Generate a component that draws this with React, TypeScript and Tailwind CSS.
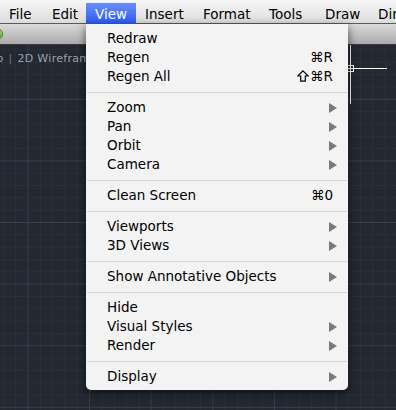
import React from 'react';

type Entry =
  | { kind: 'sep' }
  | { kind: 'item'; label: string; shortcut?: string; shift?: boolean; submenu?: boolean };

const MENU_BAR: { label: string; width: string; active?: boolean }[] = [
  { label: 'File', width: 'w-[43px]' },
  { label: 'Edit', width: 'w-[43px]' },
  { label: 'View', width: 'w-[50px]', active: true },
  { label: 'Insert', width: 'w-[58px]' },
  { label: 'Format', width: 'w-[66px]' },
  { label: 'Tools', width: 'w-[56px]' },
  { label: 'Draw', width: 'w-[53px]' },
  { label: 'Dimension', width: 'w-[90px]' },
];

const VIEW_MENU: Entry[] = [
  { kind: 'item', label: 'Redraw' },
  { kind: 'item', label: 'Regen', shortcut: '⌘R' },
  { kind: 'item', label: 'Regen All', shortcut: '⌘R', shift: true },
  { kind: 'sep' },
  { kind: 'item', label: 'Zoom', submenu: true },
  { kind: 'item', label: 'Pan', submenu: true },
  { kind: 'item', label: 'Orbit', submenu: true },
  { kind: 'item', label: 'Camera', submenu: true },
  { kind: 'sep' },
  { kind: 'item', label: 'Clean Screen', shortcut: '⌘0' },
  { kind: 'sep' },
  { kind: 'item', label: 'Viewports', submenu: true },
  { kind: 'item', label: '3D Views', submenu: true },
  { kind: 'sep' },
  { kind: 'item', label: 'Show Annotative Objects', submenu: true },
  { kind: 'sep' },
  { kind: 'item', label: 'Hide' },
  { kind: 'item', label: 'Visual Styles', submenu: true },
  { kind: 'item', label: 'Render', submenu: true },
  { kind: 'sep' },
  { kind: 'item', label: 'Display', submenu: true },
];

// drawing grid of the model space
const GridCanvas = () => {
  const minor = 12.32;
  const ox = 28 - minor * 2;
  const oy = 99.3 - 45 - minor * 5;
  const lines = [];
  for (let i = 0; i < 40; i++) {
    const x = ox + i * minor;
    if (x > 400) break;
    const major = i % 5 === 2;
    lines.push(
      <line key={`v${i}`} x1={x} y1={0} x2={x} y2={370} stroke={major ? '#373e50' : '#2b313b'} strokeWidth={1} />
    );
  }
  for (let i = 0; i < 40; i++) {
    const y = oy + i * minor;
    if (y > 370) break;
    const major = i % 5 === 0;
    lines.push(
      <line key={`h${i}`} x1={0} y1={y} x2={400} y2={y} stroke={major ? '#373e50' : '#2b313b'} strokeWidth={1} />
    );
  }
  return (
    <svg className="block w-full h-full" viewBox="0 0 396 365" preserveAspectRatio="none">
      {lines}
      {/* crosshair cursor */}
      <line x1={350.5} y1={0} x2={350.5} y2={59} stroke="#ffffff" strokeWidth={1} />
      <line x1={300} y1={23.5} x2={387} y2={23.5} stroke="#ffffff" strokeWidth={1} />
      <rect x={347.5} y={20.5} width={6} height={6} fill="none" stroke="#ffffff" strokeWidth={1} />
    </svg>
  );
};

const SubmenuArrow = () => (
  <svg width="8" height="10" viewBox="0 0 8 10" className="block">
    <polygon points="0,0 8,5 0,10" fill="#7a7a7a" />
  </svg>
);

const ShiftKey = () => (
  <svg width="12" height="12" viewBox="0 0 12 12" className="inline-block mr-[1px] -mt-[2px] align-middle">
    <polygon points="6,0.8 11.2,6 8.3,6 8.3,11.2 3.7,11.2 3.7,6 0.8,6" fill="none" stroke="#000" strokeWidth={1.2} strokeLinejoin="miter" />
  </svg>
);

export default function App() {
  return (
    <div className="relative w-[396px] h-[410px] overflow-hidden bg-[#232831] font-['DejaVu_Sans',sans-serif] select-none">
      {/* menu bar */}
      <div className="h-[24px] flex bg-gradient-to-b from-[#f7f7f7] to-[#dcdcdc] border-b border-[#5a5a5a] text-[13.5px] text-black whitespace-nowrap">
        {MENU_BAR.map((m) => (
          <div
            key={m.label}
            className={`${m.width} shrink-0 mt-[3px] h-[21px] pl-[9px] pt-[2px] flex items-center ${
              m.active ? 'bg-gradient-to-b from-[#6a8df7] to-[#2a5af0] text-white' : ''
            }`}
          >
            {m.label}
          </div>
        ))}
      </div>

      {/* window title bar */}
      <div className="h-[21px] bg-gradient-to-b from-[#dadada] to-[#ababab] border-b border-[#3c3c3c] relative">
        <div className="absolute left-[-9px] top-[4px] w-[12px] h-[12px] rounded-full bg-gradient-to-b from-[#a9e07a] to-[#4cae2a] border border-[#3f8a25]" />
      </div>

      {/* drawing area */}
      <div className="relative h-[365px]">
        <GridCanvas />
        <div className="absolute left-[-16px] top-[6px] flex items-center gap-[5px] text-[11px] tracking-[0.3px] text-[#9ba1ab]">
          <span>Top</span>
          <span className="text-[#6e747e]">|</span>
          <span>2D Wireframe</span>
        </div>
      </div>

      {/* View pull-down menu */}
      <div className="absolute left-[86px] top-[24px] w-[262px] pt-[5px] pb-[4px] bg-[#f3f3f3] rounded-b-[5px] shadow-[0_3px_10px_rgba(0,0,0,0.6)] text-[13.5px] text-black">
        {VIEW_MENU.map((e, i) =>
          e.kind === 'sep' ? (
            <div key={i} className="pt-[6px] pb-[5px] px-[1px]">
              <div className="h-px bg-[#d6d6d6]" />
            </div>
          ) : (
            <div key={i} className="h-[19px] flex items-center justify-between pl-[21px] pr-[11px] whitespace-nowrap">
              <span>{e.label}</span>
              {e.shortcut && (
                <span className="mr-[4px] flex items-center">
                  {e.shift && <ShiftKey />}
                  {e.shortcut}
                </span>
              )}
              {e.submenu && <SubmenuArrow />}
            </div>
          )
        )}
      </div>
    </div>
  );
}
